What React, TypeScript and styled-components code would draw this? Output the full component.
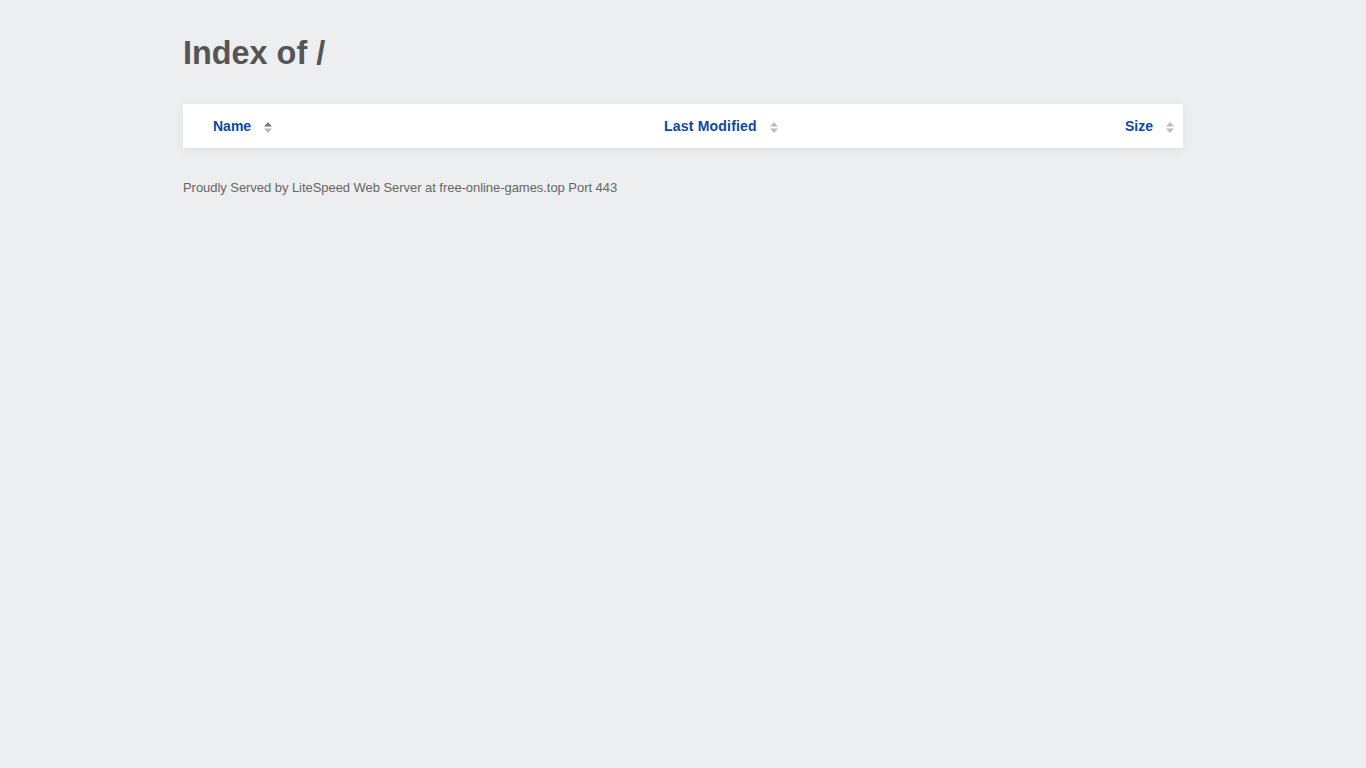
import React from 'react'
import styled, {createGlobalStyle} from "styled-components";

const GlobalStyle = createGlobalStyle`
    html, body {
        margin: 0;
        padding: 0;
        background: #edeef0;
        font-family: "Liberation Sans", Arial, sans-serif;
    }
`

const Page = styled.div`
    width: 1000px;
    margin: 0 auto;
    padding-top: 35px;
`

const Title = styled.h1`
    margin: 0 0 33px;
    font-size: 32.4px;
    line-height: 36px;
    font-weight: 700;
    color: #555;
`

const Table = styled.table`
    width: 100%;
    table-layout: fixed;
    border-collapse: collapse;
    background: #fff;
    box-shadow: 0 2px 10px rgba(0, 0, 0, 0.06);
`

const HeadCell = styled.th<{ $align?: 'left' | 'right'; $pl?: number; $pr?: number; $w?: string }>`
    height: 44px;
    padding: 0 ${p => p.$pr ?? 10}px 0 ${p => p.$pl ?? 10}px;
    text-align: ${p => p.$align ?? 'left'};
    width: ${p => p.$w ?? 'auto'};
    font-size: 14px;
    font-weight: 700;
    vertical-align: middle;
`

const SortLink = styled.a`
    display: inline-flex;
    align-items: center;
    gap: 13px;
    color: #0b47a6;
    text-decoration: none;
    cursor: pointer;
`

const Label = styled.span<{ $spacing?: number }>`
    letter-spacing: ${p => p.$spacing ?? 0}px;
`

const Icon = styled.svg`
    margin-top: 3px;
`

const Footer = styled.p`
    margin: 32px 0 0;
    font-size: 13px;
    line-height: 15px;
    color: #666;
    letter-spacing: -0.05px;
`

type SortProps = { active?: boolean }
const SortIcon: React.FC<SortProps> = ({active}) => (
    <Icon width="8" height="11" viewBox="0 0 8 11">
        <path d="M0 4.5 L4 0 L8 4.5 Z" fill={active ? '#777' : '#bbb'}/>
        <path d="M0 6.5 L4 11 L8 6.5 Z" fill="#bbb"/>
    </Icon>
)

const App: React.FC = () => {
    return (
        <>
            <GlobalStyle/>
            <Page>
                <Title>Index of /</Title>
                <Table>
                    <thead>
                    <tr>
                        <HeadCell $pl={30} $w="431px">
                            <SortLink><Label>Name</Label><SortIcon active/></SortLink>
                        </HeadCell>
                        <HeadCell $w="380px">
                            <SortLink><Label $spacing={0.2}>Last Modified</Label><SortIcon/></SortLink>
                        </HeadCell>
                        <HeadCell $align="right" $pr={9}>
                            <SortLink><Label>Size</Label><SortIcon/></SortLink>
                        </HeadCell>
                    </tr>
                    </thead>
                </Table>
                <Footer>Proudly Served by LiteSpeed Web Server at free-online-games.top Port 443</Footer>
            </Page>
        </>
    )
}

export default App;
